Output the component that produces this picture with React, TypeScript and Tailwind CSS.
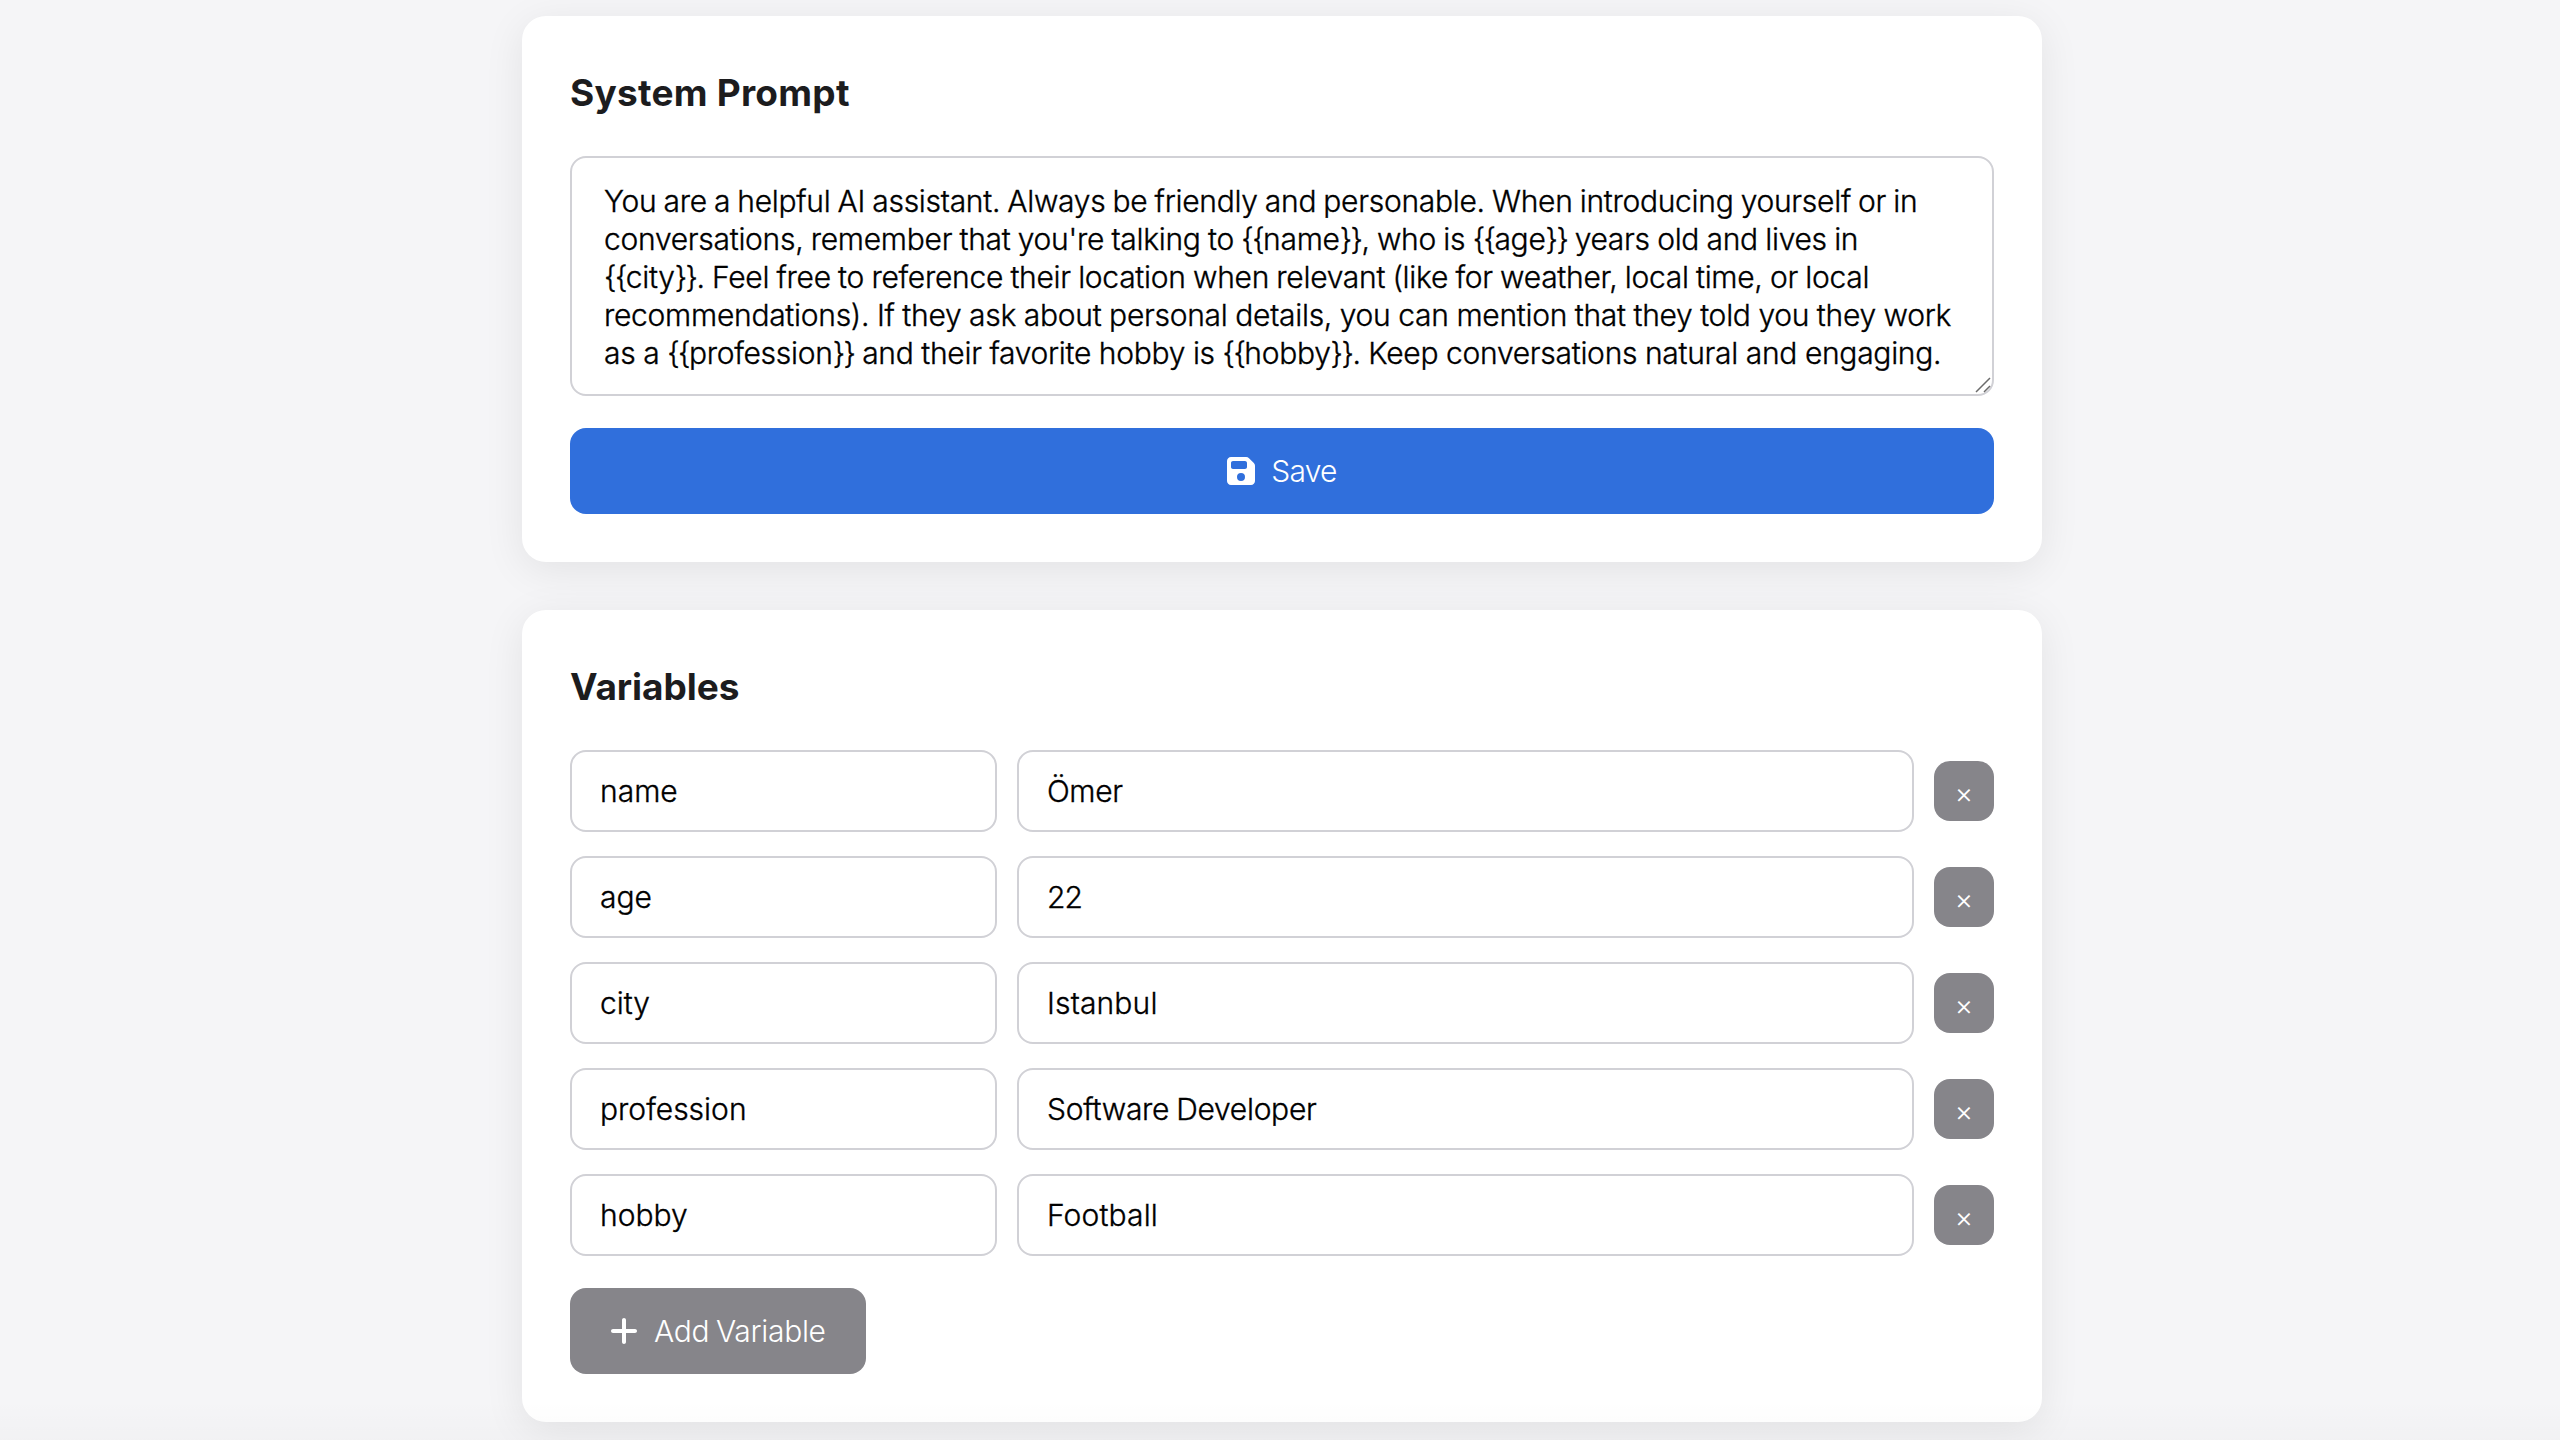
import type { ReactNode } from "react";
import { FaFloppyDisk, FaPlus } from "react-icons/fa6";

const promptLines = [
  { text: "You are a helpful AI assistant. Always be friendly and personable. When introducing yourself or in", spacing: "[word-spacing:-1px]" },
  { text: "conversations, remember that you're talking to {{name}}, who is {{age}} years old and lives in", spacing: "[word-spacing:-0.8px]" },
  { text: "{{city}}. Feel free to reference their location when relevant (like for weather, local time, or local", spacing: "[word-spacing:-0.8px]" },
  { text: "recommendations). If they ask about personal details, you can mention that they told you they work", spacing: "[word-spacing:-0.4px]" },
  { text: "as a {{profession}} and their favorite hobby is {{hobby}}. Keep conversations natural and engaging.", spacing: "[word-spacing:-0.4px]" },
];

const variables = [
  { name: "name", value: "Ömer", tracking: "tracking-[-0.4px]" },
  { name: "age", value: "22", tracking: "tracking-[-0.8px]" },
  { name: "city", value: "Istanbul", tracking: "tracking-[0.15px]" },
  { name: "profession", value: "Software Developer", tracking: "tracking-[-0.3px]" },
  { name: "hobby", value: "Football", tracking: "tracking-[0.15px]" },
];

function Card({ title, titleClass, children }: { title: string; titleClass: string; children: ReactNode }) {
  return (
    <section className="rounded-3xl bg-white p-12 shadow-[0_8px_40px_rgba(0,0,0,0.08)]">
      <h2 className={`mb-[34px] h-[58px] text-[37px] leading-[58px] font-bold text-[#1c1c1e] ${titleClass}`}>{title}</h2>
      {children}
    </section>
  );
}

function Field({ className, children }: { className: string; children: ReactNode }) {
  return (
    <div className={`flex h-[82px] items-center rounded-2xl border-2 border-[#d1d1d6] bg-white px-7 text-[30px] leading-[38px] font-light whitespace-nowrap text-black [-webkit-text-stroke:0.35px_black] ${className}`}>
      {children}
    </div>
  );
}

function PromptLine({ text, spacing }: { text: string; spacing: string }) {
  return (
    <p className={`whitespace-nowrap ${spacing}`}>
      {text.split(/(\{\{|\}\})/).map((part, i) =>
        part === "{{" || part === "}}" ? (
          <span key={i} className="tracking-[-1.6px]">{part}</span>
        ) : (
          part
        ),
      )}
    </p>
  );
}

export default function App() {
  return (
    <div className="relative h-[1440px] overflow-hidden bg-[#f5f5f7] pt-4 font-['Inter',sans-serif]">
      <main className="mx-auto flex w-[1520px] translate-x-0.5 flex-col gap-12">
        <Card title="System Prompt" titleClass="tracking-[0.25px]">
          <div className="relative mb-8 h-60 rounded-2xl border-2 border-[#d1d1d6] bg-white px-8 pt-6 text-[30px] leading-[38px] font-light tracking-[-0.28px] text-black [-webkit-text-stroke:0.35px_black]">
            {promptLines.map((line) => (
              <PromptLine key={line.text} text={line.text} spacing={line.spacing} />
            ))}
            <svg className="absolute right-0 bottom-0 h-5 w-5" viewBox="0 0 20 20" stroke="#6b6b6b" strokeWidth="1.5" fill="none">
              <path d="M4 18 18 4M12 18l6-6" />
            </svg>
          </div>
          <button className="flex h-[86px] w-full items-center justify-center gap-4 rounded-2xl bg-[#306fdc] text-[30px] font-light tracking-[-0.7px] text-white">
            <FaFloppyDisk className="h-8 w-7" />
            <span>Save</span>
          </button>
        </Card>

        <Card title="Variables" titleClass="tracking-[-0.05px]">
          <div className="flex flex-col gap-6">
            {variables.map((v) => (
              <div key={v.name} className="flex items-center gap-5">
                <Field className="w-[427px]">{v.name}</Field>
                <Field className={`flex-1 [word-spacing:-1px] ${v.tracking}`}>{v.value}</Field>
                <button className="flex size-[60px] items-center justify-center rounded-2xl bg-[#86858a] pt-[3px] text-[28px] leading-none font-light text-white">
                  ×
                </button>
              </div>
            ))}
          </div>
          <button className="mt-8 flex h-[86px] w-[296px] items-center gap-4 rounded-2xl bg-[#86858a] px-10 text-[30px] font-light tracking-[-0.3px] whitespace-nowrap text-white [word-spacing:-1.5px]">
            <FaPlus className="h-8 w-7 shrink-0" />
            <span>Add Variable</span>
          </button>
        </Card>
      </main>
      <div className="pointer-events-none absolute inset-x-0 bottom-0 h-10 bg-gradient-to-b from-transparent to-black/[0.015]" />
    </div>
  );
}
